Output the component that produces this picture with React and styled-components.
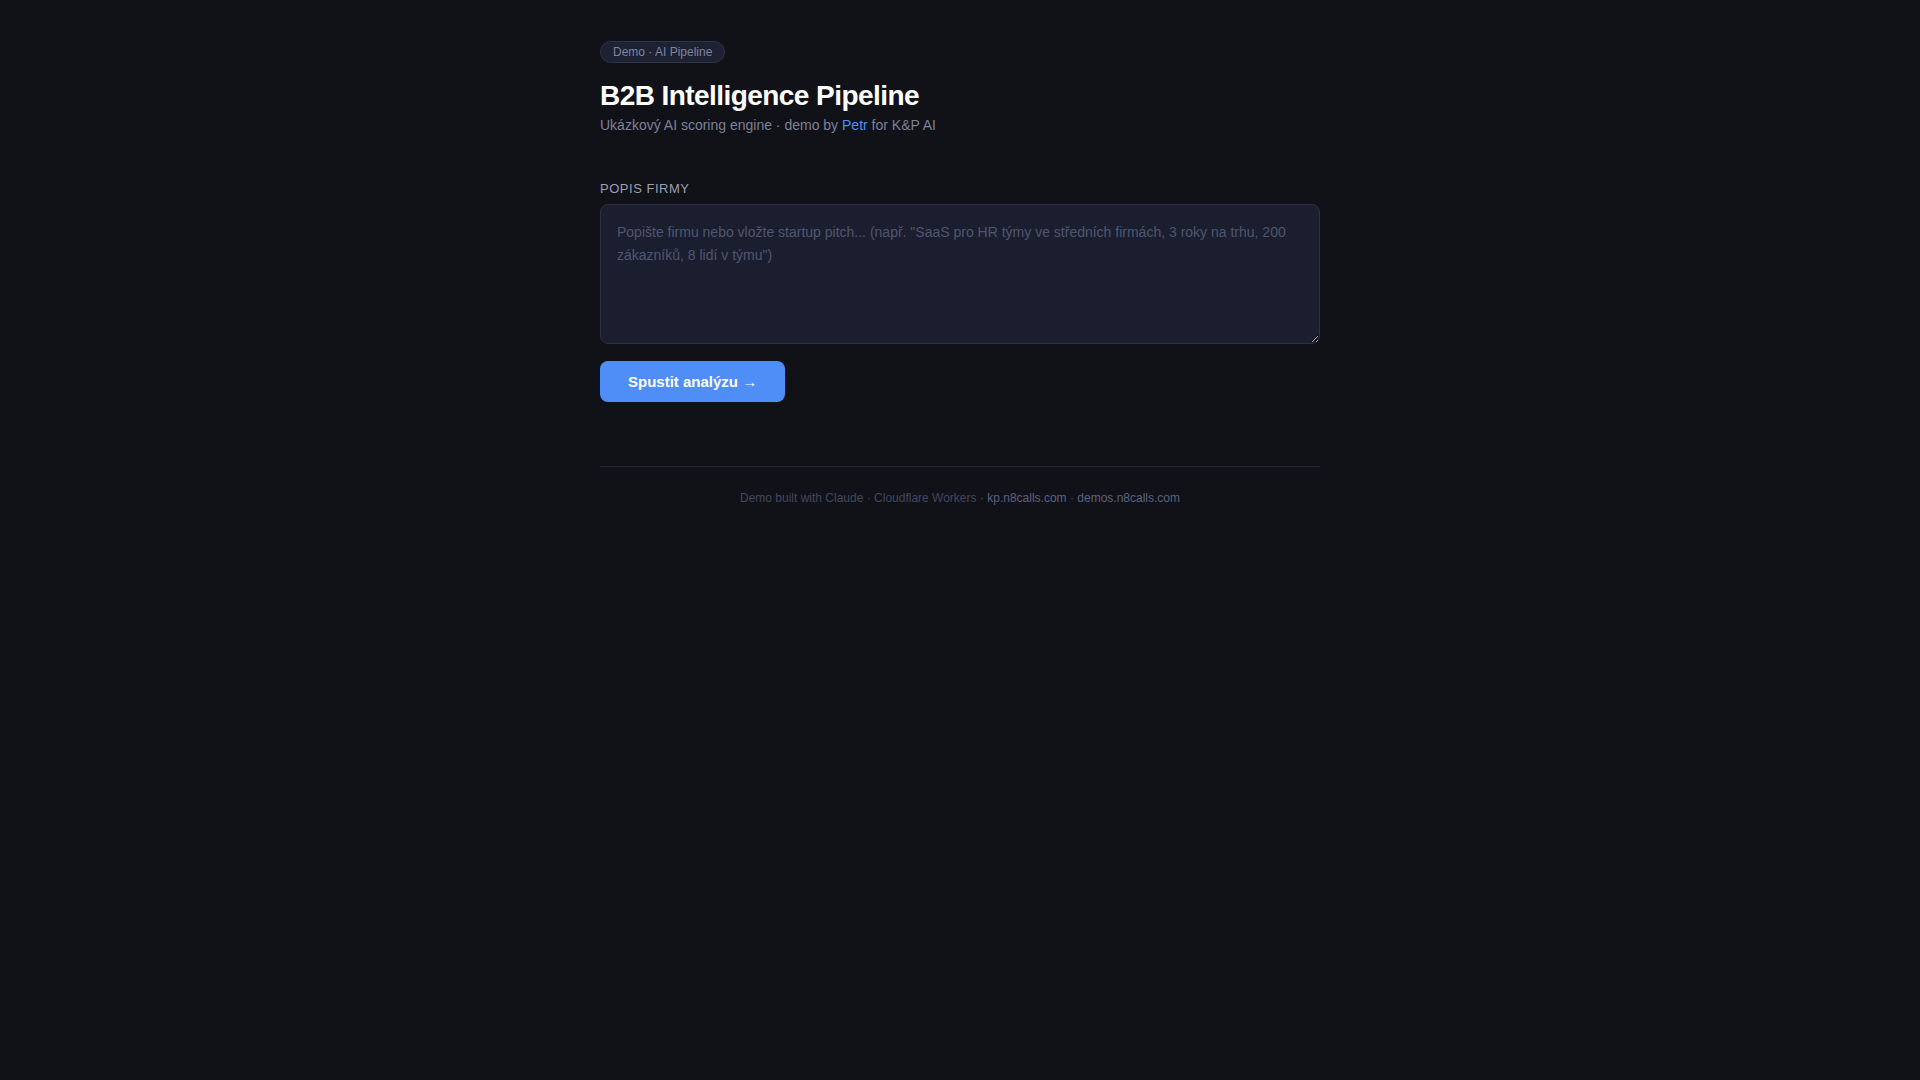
import styled, { createGlobalStyle } from "styled-components";

const GlobalStyle = createGlobalStyle`
  html, body {
    margin: 0;
    padding: 0;
    background: #111218;
    min-height: 100%;
  }
  body {
    font-family: "Liberation Sans", Arial, sans-serif;
    color: #e6e8ef;
  }
`;

function App() {
  return (
    <>
      <GlobalStyle />
      <Page>
        <Header>
          <Badge>Demo · AI Pipeline</Badge>
          <Title>B2B Intelligence Pipeline</Title>
          <Subtitle>
            Ukázkový AI scoring engine · demo by <Accent>Petr</Accent> for K&amp;P AI
          </Subtitle>
        </Header>

        <Form onSubmit={(e) => e.preventDefault()}>
          <Label htmlFor="popis">Popis firmy</Label>
          <TextArea
            id="popis"
            placeholder={'Popište firmu nebo vložte startup pitch... (např. "SaaS pro HR týmy ve středních firmách, 3 roky na trhu, 200 zákazníků, 8 lidí v týmu")'}
          />
          <RunButton type="submit">Spustit analýzu →</RunButton>
        </Form>

        <Footer>
          Demo built with Claude · Cloudflare Workers ·{" "}
          <FooterLink href="#">kp.n8calls.com</FooterLink> ·{" "}
          <FooterLink href="#">demos.n8calls.com</FooterLink>
        </Footer>
      </Page>
    </>
  );
}

const Page = styled.main`
  max-width: 720px;
  margin: 0 auto;
  padding: 41px 0 40px;
`;

const Header = styled.header`
  margin-bottom: 45px;
`;

const Badge = styled.span`
  display: inline-block;
  padding: 3px 12px;
  font-size: 12px;
  line-height: 14px;
  color: #7d84a3;
  background: #1e2132;
  border: 1px solid #2d3248;
  border-radius: 999px;
`;

const Title = styled.h1`
  margin: 16px 0 2px;
  font-size: 28px;
  line-height: 1.2;
  font-weight: 700;
  letter-spacing: -0.02em;
  color: #ffffff;
`;

const Subtitle = styled.p`
  margin: 0;
  font-size: 14px;
  line-height: 1.5;
  color: #7b8097;
`;

const Accent = styled.span`
  color: #4f8ef7;
`;

const Form = styled.form`
  display: flex;
  flex-direction: column;
  align-items: flex-start;
`;

const Label = styled.label`
  display: block;
  margin-bottom: 8px;
  font-size: 13px;
  line-height: 1.2;
  letter-spacing: 0.04em;
  text-transform: uppercase;
  color: #9a9fb3;
`;

const TextArea = styled.textarea`
  box-sizing: border-box;
  width: 100%;
  height: 140px;
  padding: 16px;
  font-family: "Liberation Sans", Arial, sans-serif;
  font-size: 14px;
  line-height: 1.6;
  color: #e6e8ef;
  background: #1b1e2e;
  border: 1px solid #2b3047;
  border-radius: 8px;
  outline: none;
  resize: vertical;

  &::placeholder {
    color: #50566f;
  }
`;

const RunButton = styled.button`
  margin-top: 17px;
  padding: 12px 28px;
  font-family: "Liberation Sans", Arial, sans-serif;
  font-size: 15px;
  line-height: 17px;
  font-weight: 700;
  color: #ffffff;
  background: #4f8ef7;
  border: none;
  border-radius: 8px;
  cursor: pointer;
`;

const Footer = styled.footer`
  margin-top: 64px;
  padding-top: 24px;
  border-top: 1px solid #22263a;
  text-align: center;
  font-size: 12px;
  color: #41475f;
`;

const FooterLink = styled.a`
  color: #5a6180;
  text-decoration: none;
`;

export default App;
